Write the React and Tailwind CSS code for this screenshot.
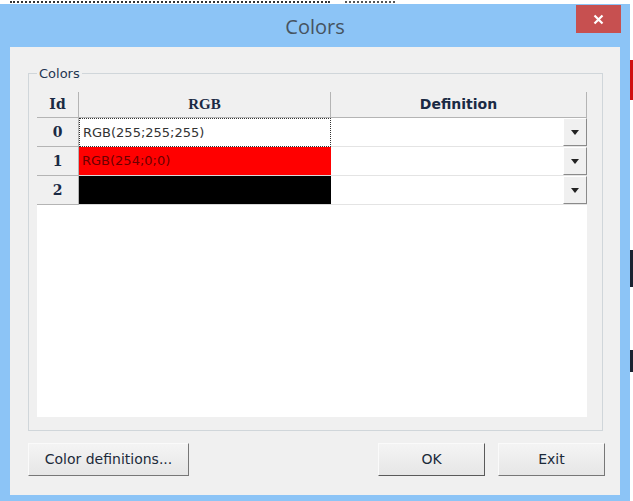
const rows = [
  { id: 0, rgb: 'RGB(255;255;255)', cell: 'bg-white text-[#333] border border-dotted border-[#333]' },
  { id: 1, rgb: 'RGB(254;0;0)', cell: 'bg-[#ff0000] text-[#6b0000] border-b border-[#d8d8d8]' },
  { id: 2, rgb: '', cell: 'bg-black text-black border-b border-[#d8d8d8]' },
];

function DropButton() {
  return (
    <div className="w-[24px] h-full bg-[#f0f0f0] border-r border-b border-[#8a8a8a] border-t border-l border-t-white border-l-white flex items-center justify-center">
      <svg width="8" height="5" viewBox="0 0 8 5">
        <polygon points="0,0 8,0 4,5" fill="#222" />
      </svg>
    </div>
  );
}

function WinButton({ children, width, primary }) {
  return (
    <button
      className={`h-[33px] ${width} bg-gradient-to-b from-[#f4f4f4] to-[#e6e6e6] border border-t-[#fafafa] border-l-[#fafafa] ${
        primary ? 'border-[#5a5a5a] border-t-[#7a7a7a] border-l-[#7a7a7a]' : 'border-r-[#777] border-b-[#777]'
      } text-[14px] text-[#1c2a3a] flex items-center justify-center`}
    >
      {children}
    </button>
  );
}

export default function App() {
  return (
    <div className="w-[633px] h-[501px] bg-white flex flex-col overflow-hidden font-['DejaVu_Sans',sans-serif]">
      {/* page behind the dialog */}
      <div className="h-[4px] flex items-center">
        <div className="w-[320px] border-t-2 border-dotted border-[#333] ml-[10px]" />
        <div className="w-[50px] border-t-2 border-dotted border-[#555] ml-[15px]" />
      </div>

      <div className="flex flex-1">
        {/* window */}
        <div className="w-[630px] bg-[#8cc4f6] flex flex-col">
          <div className="h-[43px] flex items-start relative">
            <div className="flex-1 text-center pt-[8px] text-[20px] text-[#46535f] font-['Open_Sans',sans-serif]">Colors</div>
            <div className="absolute right-[9px] top-[1px] w-[45px] h-[28px] bg-[#c75050] flex items-center justify-center">
              <svg width="11" height="11" viewBox="0 0 11 11">
                <path d="M1.5 1.5 L9.5 9.5 M9.5 1.5 L1.5 9.5" stroke="#fff" strokeWidth="2.2" />
              </svg>
            </div>
          </div>

          {/* client area */}
          <div className="mx-[10px] h-[448px] bg-[#f0f0f0] flex flex-col pl-[18px] pr-[15px] pt-[26px]">
            {/* group box */}
            <div className="h-[358px] w-[575px] border border-[#d0d6da] relative pt-[18px] pl-[8px] pb-[13px] pr-[15px] flex flex-col">
              <span className="absolute left-[8px] top-[-10px] bg-[#f0f0f0] px-[2px] text-[13px] text-[#1f3550]">Colors</span>

              <div className="flex-1 bg-white flex flex-col">
                {/* header */}
                <div className="flex h-[26px] bg-[#f0f0f0] text-[14px] font-bold text-[#1a2a44]">
                  <div className="w-[42px] border-r border-b border-[#b4b4b4] flex items-center justify-center font-['DejaVu_Serif',serif]">Id</div>
                  <div className="w-[252px] border-r border-b border-[#b4b4b4] flex items-center justify-center font-['Liberation_Serif',serif] text-[15px]">RGB</div>
                  <div className="w-[256px] border-r border-b border-[#b4b4b4] flex items-center justify-center">Definition</div>
                </div>

                {rows.map((r) => (
                  <div key={r.id} className="flex h-[29px]">
                    <div className="w-[42px] bg-[#f0f0f0] border-r border-b border-[#b4b4b4] flex items-center justify-center text-[14px] font-bold text-[#1a2a44] font-['DejaVu_Serif',serif]">
                      {r.id}
                    </div>
                    <div className={`w-[252px] ${r.cell} flex items-center text-[13px] pl-[3px]`}>
                      {r.rgb}
                    </div>
                    <div className="w-[256px] flex border-b border-[#e4e4e4] bg-white">
                      <div className="flex-1" />
                      <DropButton />
                    </div>
                  </div>
                ))}
                <div className="flex-1" />
              </div>
            </div>

            {/* buttons */}
            <div className="flex mt-[12px]">
              <WinButton width="w-[161px]">Color definitions...</WinButton>
              <div className="flex-1" />
              <WinButton width="w-[107px]" primary>OK</WinButton>
              <div className="w-[13px]" />
              <WinButton width="w-[107px]">Exit</WinButton>
            </div>
          </div>
        </div>

        {/* page behind the dialog, right edge */}
        <div className="w-[3px] flex flex-col">
          <div className="h-[56px]" />
          <div className="h-[40px] bg-[#d01010]" />
          <div className="h-[150px]" />
          <div className="h-[37px] bg-[#1a2230]" />
          <div className="h-[63px]" />
          <div className="h-[22px] bg-[#1a2230]" />
        </div>
      </div>
    </div>
  );
}
